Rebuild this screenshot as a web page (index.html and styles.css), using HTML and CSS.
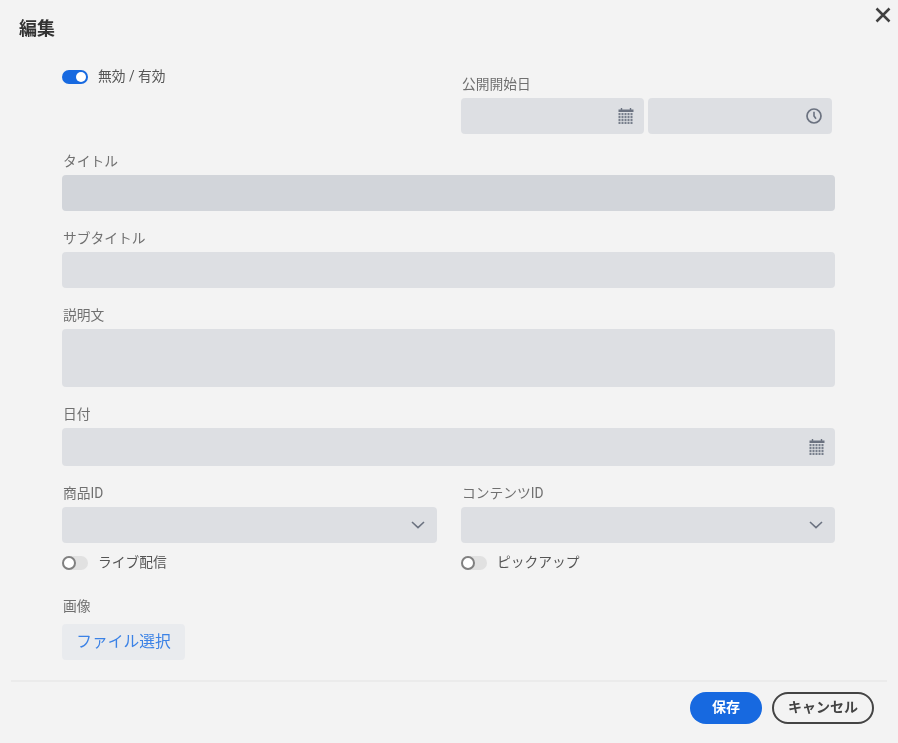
FILE: index.html
```html
<!DOCTYPE html>
<html lang="ja">
<head>
<meta charset="utf-8">
<title>編集</title>
<link rel="stylesheet" href="styles.css">
</head>
<body>
<div class="dialog">
  <header class="head">
    <h1 class="title">編集</h1>
    <svg class="close" viewBox="0 0 16 16" width="16" height="16"><path d="M1.5 1.5 14.5 14.5M14.5 1.5 1.5 14.5" fill="none" stroke="#404040" stroke-width="2.5"/></svg>
  </header>
  <form class="form">
    <div class="cols top">
      <div class="toggle-row first">
        <span class="toggle on"></span><span class="toggle-label">無効 / 有効</span>
      </div>
      <div class="field">
        <div class="label">公開開始日</div>
        <div class="pair">
          <div class="input h36 date"><svg class="icon" viewBox="0 0 16 16" width="16" height="16"><use href="#cal"/></svg></div>
          <div class="input h36 time"><svg class="icon" viewBox="0 0 16 16" width="16" height="16"><circle cx="8" cy="8" r="7" fill="none" stroke="#6b7280" stroke-width="1.7"/><path d="M8 3.8V8l2 2.8" fill="none" stroke="#6b7280" stroke-width="1.6"/></svg></div>
        </div>
      </div>
    </div>
    <div class="field gap"><div class="label">タイトル</div><div class="input h36 focus"></div></div>
    <div class="field gap"><div class="label">サブタイトル</div><div class="input h36"></div></div>
    <div class="field gap"><div class="label">説明文</div><div class="input h58"></div></div>
    <div class="field gap"><div class="label">日付</div><div class="input h38 date"><svg class="icon" viewBox="0 0 16 16" width="16" height="16"><use href="#cal"/></svg></div></div>
    <div class="cols gap">
      <div class="field">
        <div class="label">商品ID</div>
        <div class="input h36 select"><svg class="chev" viewBox="0 0 14 8" width="14" height="8"><path d="M1 1 7 6.6 13 1" fill="none" stroke="#6b7280" stroke-width="1.6"/></svg></div>
        <div class="toggle-row below"><span class="toggle"></span><span class="toggle-label">ライブ配信</span></div>
      </div>
      <div class="field">
        <div class="label">コンテンツID</div>
        <div class="input h36 select"><svg class="chev" viewBox="0 0 14 8" width="14" height="8"><path d="M1 1 7 6.6 13 1" fill="none" stroke="#6b7280" stroke-width="1.6"/></svg></div>
        <div class="toggle-row below"><span class="toggle"></span><span class="toggle-label">ピックアップ</span></div>
      </div>
    </div>
    <div class="field image">
      <div class="label">画像</div>
      <button type="button" class="file">ファイル選択</button>
    </div>
  </form>
  <footer class="foot">
    <button type="button" class="btn save">保存</button>
    <button type="button" class="btn cancel">キャンセル</button>
  </footer>
</div>
<svg class="defs" width="0" height="0">
  <symbol id="cal" viewBox="0 0 16 16">
    <path d="M0.5 1.5H15.5V4H0.5Z" fill="#6b7280"/>
    <path d="M3.5 0V2M12.5 0V2" stroke="#6b7280" stroke-width="1.4"/>
    <path d="M1.5 5V16M4.5 5V16M7.5 5V16M10.5 5V16M13.5 5V16" stroke="#777e8b" stroke-width="2" stroke-dasharray="2.2 0.8"/>
  </symbol>
</svg>
</body>
</html>
```
FILE: styles.css
```css
*, *::before, *::after { box-sizing: border-box; }
html, body { margin: 0; height: 100%; }
body {
  background: #f3f3f3;
  font-family: Roboto, "Noto Sans CJK JP", sans-serif;
  color: #666;
  font-size: 14px;
  overflow: hidden;
}
.dialog { width: 898px; height: 743px; display: flex; flex-direction: column; will-change: opacity; }
.head { height: 74px; position: relative; padding: 16px 0 0 19px; }
.title { margin: 0; font-size: 18px; line-height: 26px; font-weight: 700; color: #333; }
.close { position: absolute; left: 875px; top: 7px; }
.form { padding: 0 63px 0 62px; }
.cols { display: grid; grid-template-columns: 375px 374px; column-gap: 24px; }
.field.gap, .cols.gap { margin-top: 17px; }
.label { font-size: 13.75px; line-height: 20px; margin-bottom: 4px; padding-left: 1px; color: #707070; }
.input { background: #dddfe3; border-radius: 4px; display: flex; align-items: center; justify-content: flex-end; }
.input.focus { background: #d2d5da; }
.h36 { height: 36px; }
.h38 { height: 38px; }
.h58 { height: 58px; }
.pair { display: grid; grid-template-columns: 183px 184px; gap: 4px; width: 371px; }
.date { padding-right: 10px; }
.time { padding-right: 10px; }
.select { padding-right: 12px; }
.icon { display: block; }
.chev { display: block; }
.defs { position: absolute; }
.toggle-row { display: flex; }
.toggle-row.first { height: 20px; align-items: flex-start; margin-top: -4px; }
.toggle-row.below { margin-top: 13px; height: 14px; }
.toggle {
  width: 26px; height: 14px; border-radius: 7px; background: #e1e1e1;
  position: relative; flex: none; margin-right: 10px;
}
.toggle::after {
  content: ""; position: absolute; left: 0; top: 0; width: 14px; height: 14px;
  border-radius: 50%; background: #fff; border: 2px solid #808080;
}
.toggle.on { background: #1769e0; }
.toggle.on::after { left: 14px; top: 2px; width: 10px; height: 10px; border: 0; }
.toggle-label { font-size: 13.75px; line-height: 14px; position: relative; top: -1px; color: #555; }
.image { margin-top: 26px; }
.image .label { margin-bottom: 8px; }
.file {
  display: block; width: 123px; height: 36px; border: 0; border-radius: 4px; background: #e9ebee;
  color: #3b82e6; font: 15.75px/36px Roboto, "Noto Sans CJK JP", sans-serif; padding: 0;
}
.foot {
  margin: 20px 11px 0; border-top: 2px solid #ebebeb; padding: 10px 13px 0 0;
  display: flex; justify-content: flex-end; gap: 10px;
}
.btn {
  height: 32px; border-radius: 16px; font: 700 14px/26px Roboto, "Noto Sans CJK JP", sans-serif; padding: 0 0 2px;
}
.save { width: 72px; background: #1769e0; color: #fff; border: 0; }
.cancel { width: 102px; background: transparent; color: #444; border: 2px solid #444; }
```
